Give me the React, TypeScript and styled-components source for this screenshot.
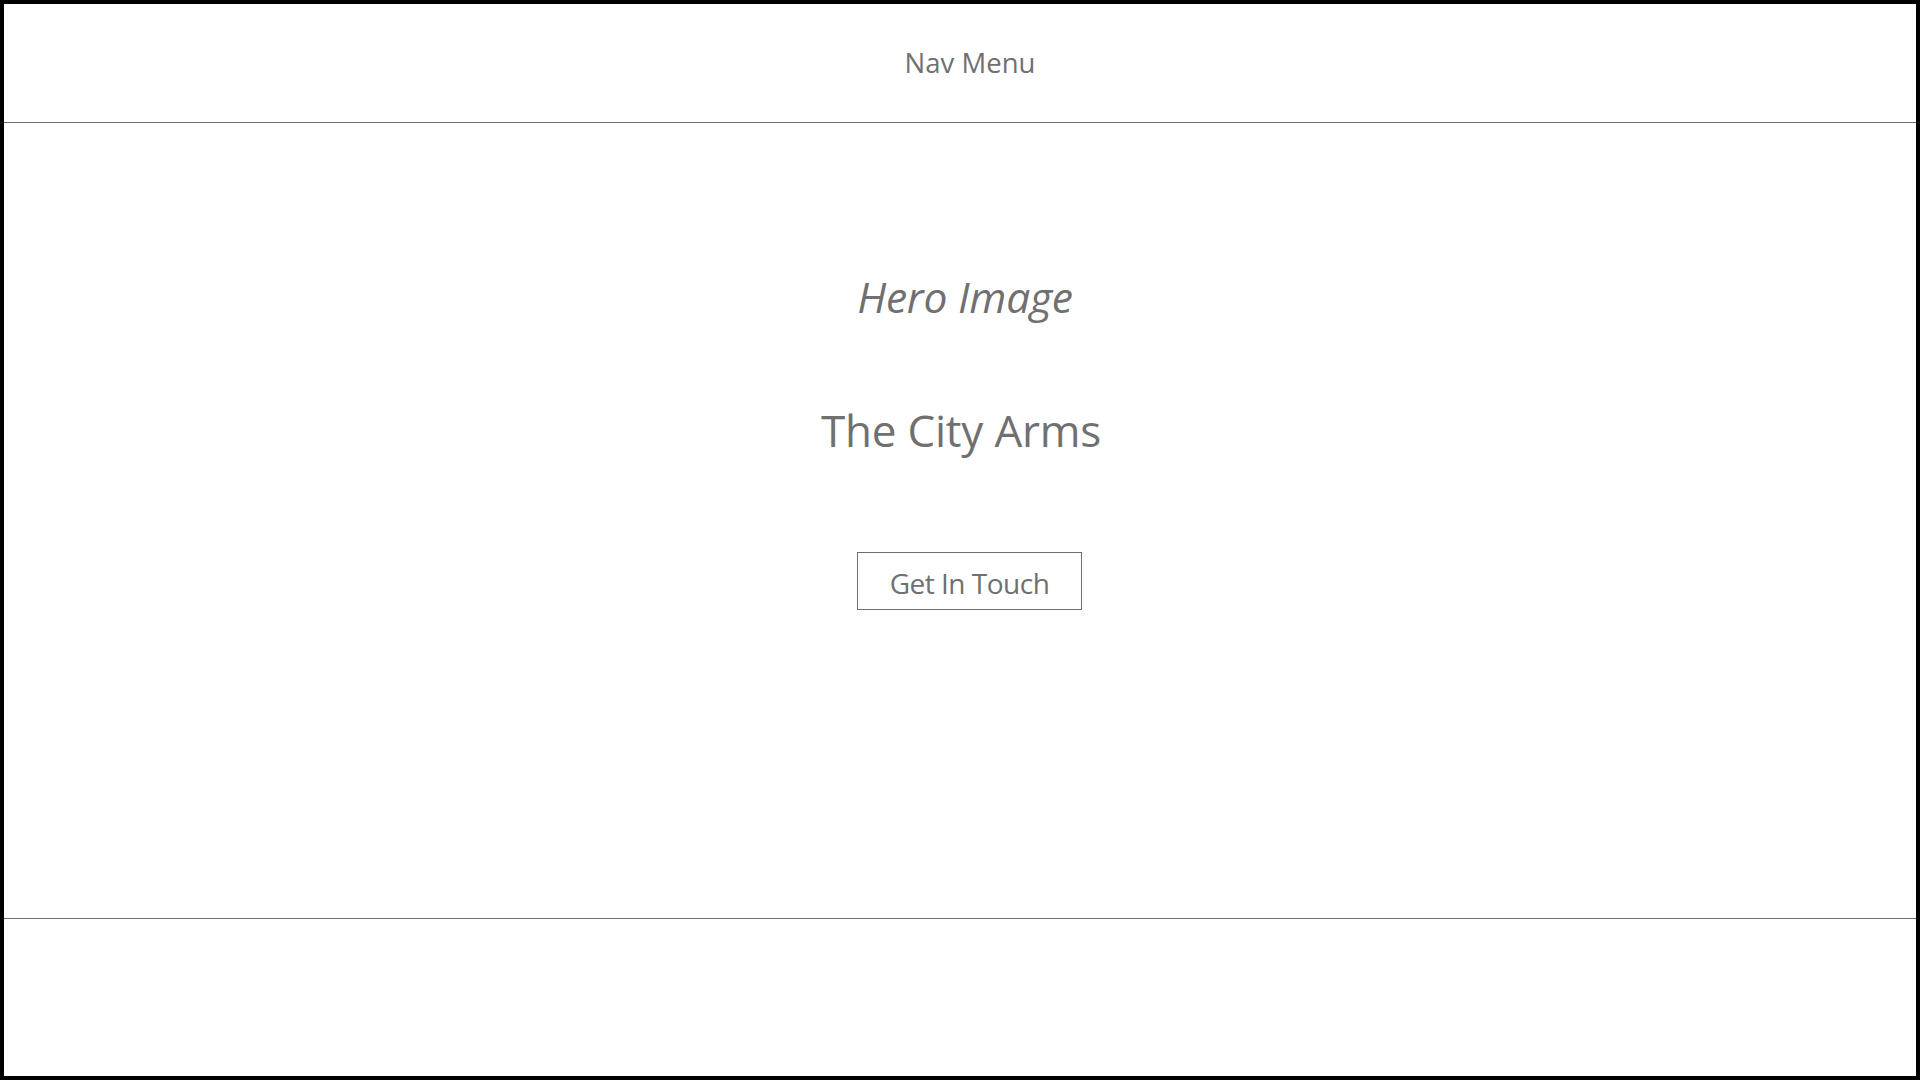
import styled, { createGlobalStyle } from "styled-components"

const GlobalStyle = createGlobalStyle`
    html, body {
        margin: 0;
        padding: 0;
        background: #ffffff;
    }
    body {
        font-family: "Open Sans", "Noto Sans", sans-serif;
        color: #707070;
    }
`

function App() {
    return (
        <>
            <GlobalStyle />
            <Frame>
                <Header>
                    <NavText $offset={20}>Nav Menu</NavText>
                </Header>

                <Hero>
                    <HeroLabel $offset={10}>Hero Image</HeroLabel>
                    <Title $offset={2}>The City Arms</Title>
                    <ContactButton $offset={19}>Get In Touch</ContactButton>
                </Hero>

                <Footer />
            </Frame>
        </>
    )
}

export default App

const Frame = styled.div`
    width: 1920px;
    height: 1080px;
    box-sizing: border-box;
    border: 4px solid #000000;
    display: flex;
    flex-direction: column;
    background: #ffffff;
`

const Header = styled.header`
    height: 118px;
    border-bottom: 1px solid #707070;
    display: flex;
    justify-content: center;
    align-items: center;
`

const NavText = styled.p<{ $offset: number }>`
    margin: 0 0 0 ${(p) => p.$offset}px;
    font-size: 27.5px;
    line-height: 1;
    color: #707070;
`

const Hero = styled.main`
    height: 795px;
    border-bottom: 1px solid #707070;
    display: flex;
    flex-direction: column;
    align-items: center;
`

const HeroLabel = styled.p<{ $offset: number }>`
    margin: 153px 0 0 ${(p) => p.$offset}px;
    font-size: 42.5px;
    font-style: italic;
    line-height: 1;
    letter-spacing: -0.2px;
`

const Title = styled.h1<{ $offset: number }>`
    margin: 89px 0 0 ${(p) => p.$offset}px;
    font-size: 44px;
    font-weight: 400;
    line-height: 1;
    letter-spacing: -0.2px;
`

const ContactButton = styled.button<{ $offset: number }>`
    margin: 100px 0 0 ${(p) => p.$offset}px;
    width: 225px;
    height: 58px;
    box-sizing: border-box;
    padding: 15px 0 11px;
    border: 1px solid #707070;
    border-radius: 0;
    background: #ffffff;
    font-family: "Open Sans", "Noto Sans", sans-serif;
    font-size: 28px;
    line-height: 1;
    letter-spacing: -0.5px;
    color: #707070;
    cursor: pointer;
`

const Footer = styled.footer`
    flex: 1;
`
